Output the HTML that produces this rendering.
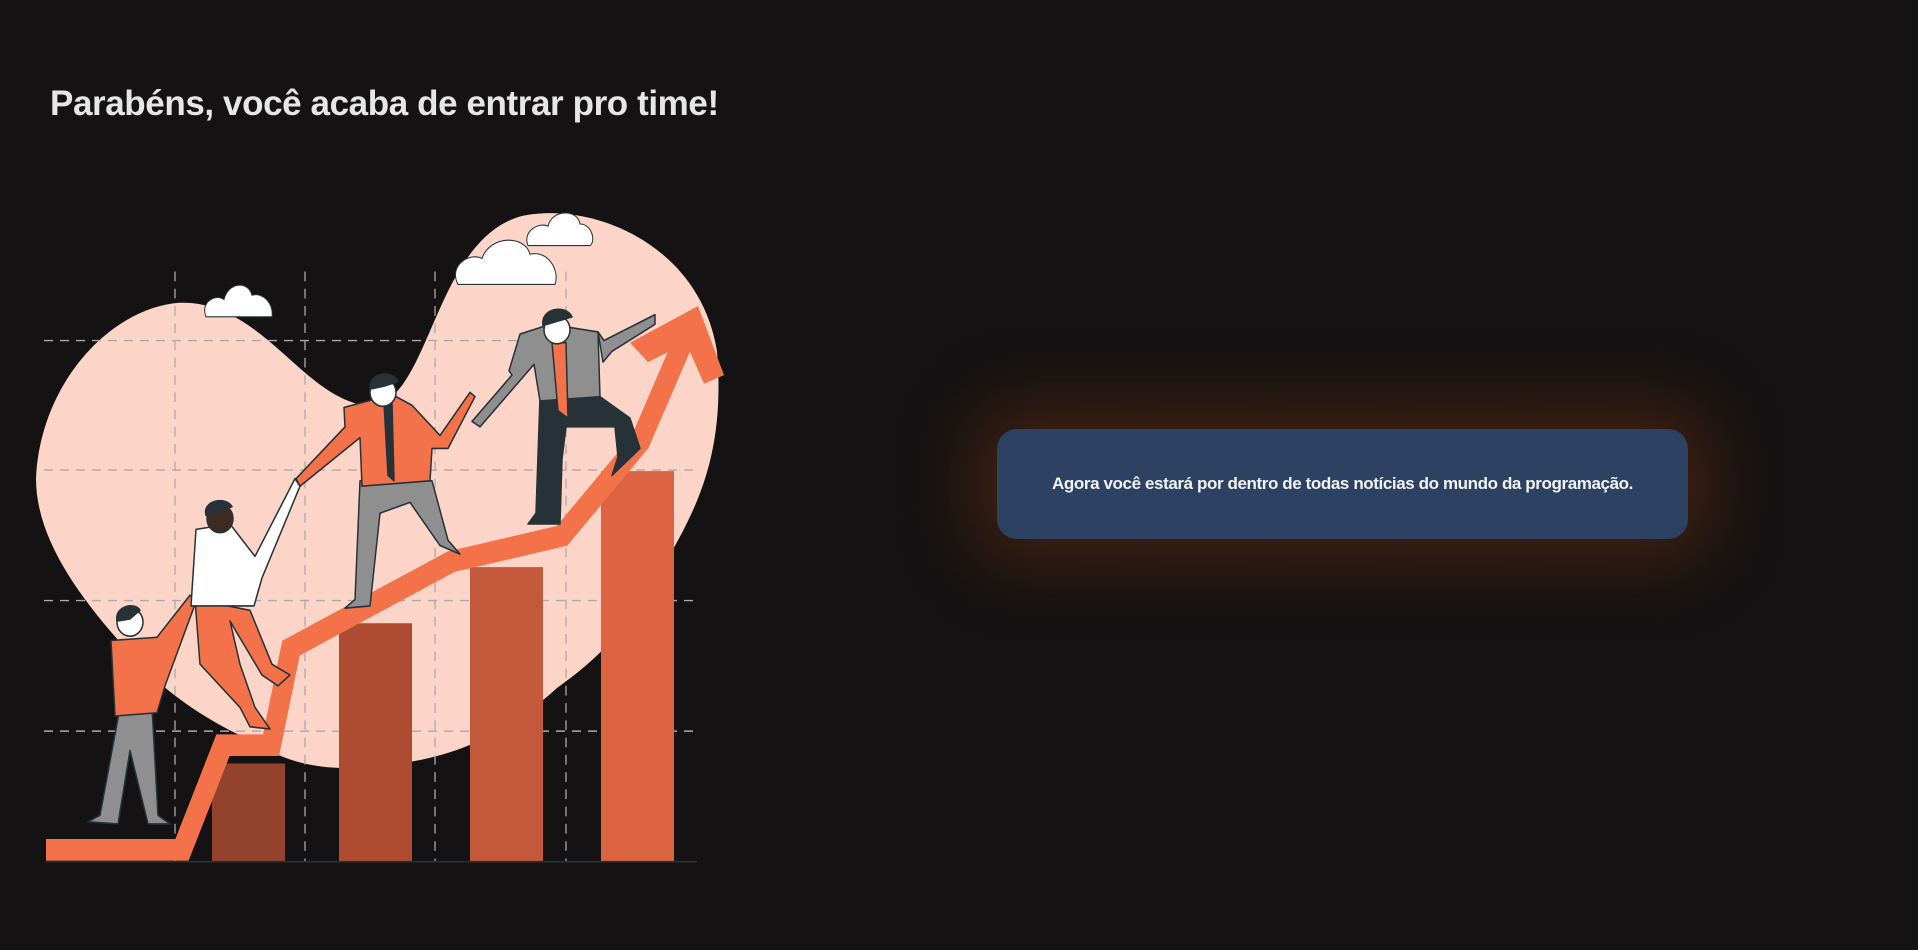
<!DOCTYPE html>
<html><head><meta charset="utf-8"><style>
html,body{margin:0;padding:0;background:#141213;width:1918px;height:950px;overflow:hidden}
h1{position:absolute;left:50px;top:84px;margin:0;font-family:"Liberation Sans",sans-serif;font-weight:bold;font-size:35px;letter-spacing:-0.4px;color:#e6e6e6;white-space:nowrap;line-height:40px}
.card{position:absolute;left:997px;top:429px;width:691px;height:110px;background:#2d4262;border-radius:20px;box-shadow:0 0 70px 25px rgba(150,60,15,0.35);display:flex;align-items:center;justify-content:center;font-family:"Liberation Sans",sans-serif;font-weight:bold;font-size:17px;letter-spacing:-0.4px;color:#f2f2f2}
svg{position:absolute;left:0;top:0}
</style></head><body>
<h1>Parabéns, você acaba de entrar pro time!</h1>
<svg width="760" height="950" viewBox="0 0 760 950">
<g transform="translate(0,60) scale(1,1.079) translate(0,-60)">
<path d="M36,448 C40,360 110,290 179,285 C260,282 300,370 364,380 C430,388 430,230 520,205 C590,190 700,230 717,330 C725,420 700,470 669,520 C630,590 590,620 557,642 C500,690 450,705 400,712 C330,722 290,714 250,690 C200,670 160,640 140,620 C90,570 36,510 36,448 Z" fill="#fcd5c8"/>
<g stroke="#aaa" stroke-width="1.3" stroke-dasharray="9 7" fill="none">
<line x1="44" y1="320" x2="698" y2="320"/><line x1="44" y1="440" x2="698" y2="440"/><line x1="44" y1="561" x2="698" y2="561"/><line x1="44" y1="682" x2="698" y2="682"/>
<line x1="175" y1="256" x2="175" y2="803"/><line x1="305" y1="256" x2="305" y2="803"/><line x1="435" y1="256" x2="435" y2="803"/><line x1="566" y1="256" x2="566" y2="803"/>
</g>
<rect x="212" y="712" width="73" height="91" fill="#93422b"/>
<rect x="339" y="582" width="73" height="221" fill="#ae4c32"/>
<rect x="470" y="530" width="73" height="273" fill="#c4583a"/>
<rect x="601" y="441" width="73" height="362" fill="#dc6443"/>
<line x1="46" y1="803" x2="697" y2="803" stroke="#263238" stroke-width="1.5"/>
<polyline points="46,792 182,792 223,695 271,695 291,605 451,525 562,501 640,414 693,300" fill="none" stroke="#f4724a" stroke-width="20" stroke-linejoin="miter"/>
<polygon points="630,322 698,288 724,352 704,360 686,322 648,340" fill="#f4724a"/>
<g fill="#fff" stroke="#263238" stroke-width="1">
<path d="M206,298 C200,285 215,276 224,282 C228,266 248,264 252,278 C262,275 274,285 272,298 Z"/>
<path d="M458,268 C448,250 470,238 482,244 C490,222 525,222 530,240 C548,236 560,255 555,268 Z"/>
<path d="M528,232 C522,218 540,210 548,214 C552,198 578,198 580,212 C592,212 596,228 590,232 Z"/>
</g>
<g stroke="#263238" stroke-width="1.5" stroke-linejoin="round">
<path d="M120,660 L100,760 L88,766 L118,768 L130,700 L148,768 L170,768 L158,760 L152,660 Z" fill="#8f8f8f"/>
<path d="M111,598 L157,595 L190,556 L196,562 L165,640 L157,665 L115,668 Z" fill="#f4724a"/>
<circle cx="130" cy="581" r="13" fill="#fff"/><path d="M117,580 C114,566 135,562 140,570 L130,578 Z" fill="#263238"/>
<path d="M195,560 L200,620 L240,660 L250,678 L270,680 L255,660 L240,620 L230,580 L262,630 L278,640 L290,630 L272,620 L250,570 Z" fill="#f4724a"/>
<path d="M191,566 L196,495 L230,490 L255,520 L295,448 L300,455 L262,540 L254,566 Z" fill="#fff"/>
<circle cx="220" cy="485" r="13" fill="#3c2a23"/><path d="M206,482 C202,468 226,464 232,474 Z" fill="#263238"/>
<path d="M360,450 L355,560 L345,568 L370,566 L380,480 L410,470 L440,510 L460,518 L448,505 L432,450 Z" fill="#8f8f8f"/>
<path d="M344,382 L392,370 L412,380 L440,408 L470,368 L475,372 L448,420 L432,420 L430,450 L362,455 L360,410 L300,455 L296,448 L345,400 Z" fill="#f4724a"/>
<path d="M384,378 L388,445 L394,450 L392,378 Z" fill="#263238"/>
<circle cx="383" cy="368" r="13" fill="#fff"/><path d="M370,365 C368,350 392,346 398,358 L385,362 Z" fill="#263238"/>
<path d="M540,372 L536,480 L528,490 L560,490 L562,430 L566,400 L615,400 L618,428 L612,445 L640,420 L630,392 L600,372 Z" fill="#263238"/>
<path d="M509,348 L520,314 L550,305 L598,312 L603,340 L612,330 L655,305 L655,296 L604,320 L598,312 L600,372 L540,376 L534,342 L480,400 L472,395 L512,352 Z" fill="#8f8f8f"/>
<path d="M552,322 L558,385 L568,392 L566,322 Z" fill="#f4724a"/>
<circle cx="557" cy="310" r="13" fill="#fff"/><path d="M543,306 C540,290 566,286 572,298 L558,302 Z" fill="#263238"/>
</g>
</g>
</svg>
<div class="card">Agora você estará por dentro de todas notícias do mundo da programação.</div>
</body></html>
